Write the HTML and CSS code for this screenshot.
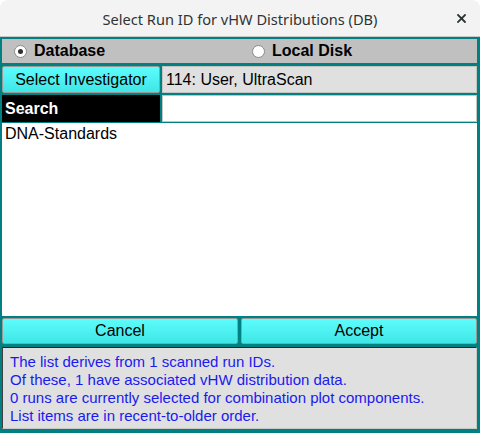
FILE: index.html
```html
<!DOCTYPE html>
<html>
<head>
<meta charset="utf-8">
<link rel="stylesheet" href="styles.css">
</head>
<body>
<div class="window">
  <div class="titlebar">
    <span class="title">Select Run ID for vHW Distributions (DB)</span>
    <svg class="close" width="9" height="9" viewBox="0 0 9 9"><path d="M1 1L8 8M8 1L1 8" stroke="#2e3436" stroke-width="1.8" stroke-linecap="square"/></svg>
  </div>
  <div class="content">
    <div class="radios">
      <label class="radio-item"><span class="radio on"></span>Database</label>
      <label class="radio-item"><span class="radio"></span>Local Disk</label>
    </div>
    <div class="row row-inv">
      <div class="btn">Select Investigator</div>
      <div class="field">114: User, UltraScan</div>
    </div>
    <div class="row row-search">
      <div class="search-label">Search</div>
      <div class="search-input"></div>
    </div>
    <div class="list">
      <div class="list-item">DNA-Standards</div>
    </div>
    <div class="buttons">
      <div class="btn">Cancel</div>
      <div class="btn">Accept</div>
    </div>
    <div class="info">
      <div>The list derives from 1 scanned run IDs.</div>
      <div>Of these, 1 have associated vHW distribution data.</div>
      <div>0 runs are currently selected for combination plot components.</div>
      <div>List items are in recent-to-older order.</div>
    </div>
  </div>
</div>
</body>
</html>
```
FILE: styles.css
```css
html, body {
  margin: 0;
  padding: 0;
  background: #ffffff;
}
.window {
  width: 480px;
  height: 433px;
  display: flex;
  flex-direction: column;
  font-family: "Liberation Sans", Arial, sans-serif;
  font-size: 16px;
}
.titlebar {
  height: 36px;
  border-bottom: 1px solid #c8c8c8;
  background: #f3f3f3;
  border-radius: 8px 8px 0 0;
  display: flex;
  align-items: center;
  justify-content: center;
  position: relative;
}
.title {
  font-family: "Noto Sans", "DejaVu Sans", sans-serif;
  font-size: 14.6px;
  color: #2e3436;
  padding-top: 1px;
}
.close {
  position: absolute;
  right: 14px;
  top: 14px;
}
.content {
  flex: 1;
  background: #008080;
  padding: 2px 3px 4px 2px;
  display: flex;
  flex-direction: column;
}
.radios {
  height: 24px;
  background: #c0c0c0;
  display: grid;
  grid-template-columns: 238px 1fr;
  align-items: center;
}
.radio-item {
  display: flex;
  align-items: center;
  padding-left: 12px;
  font-weight: bold;
  color: #000;
}
.radio {
  width: 11px;
  height: 11px;
  border: 1px solid #8a8a8a;
  border-radius: 50%;
  background: #fff;
  margin-right: 7px;
  position: relative;
  box-sizing: content-box;
}
.radio.on::after {
  content: "";
  position: absolute;
  left: 3px;
  top: 3px;
  width: 5px;
  height: 5px;
  border-radius: 50%;
  background: #303030;
}
.row {
  display: grid;
  grid-template-columns: 158px 1fr;
  column-gap: 2px;
  height: 27px;
}
.row-inv {
  margin-top: 3px;
}
.row-search {
  margin-top: 2px;
}
.btn {
  background: linear-gradient(#5efcfc, #3fe6e6);
  border: 1px solid #9a9a9a;
  border-radius: 2px;
  display: flex;
  align-items: center;
  justify-content: center;
  color: #000;
  box-sizing: border-box;
}
.field {
  background: #e0e0e0;
  border: 1px solid #c4c4c4;
  display: flex;
  align-items: center;
  padding-left: 3px;
  color: #000;
}
.search-label {
  background: #000;
  color: #fff;
  font-weight: bold;
  display: flex;
  align-items: center;
  padding-left: 3px;
}
.search-input {
  background: #fff;
  border: 1px solid #c4c4c4;
}
.list {
  margin-top: 1px;
  height: 193px;
  background: #fff;
}
.list-item {
  padding: 2px 3px;
  color: #000;
}
.buttons {
  margin-top: 2px;
  height: 26px;
  display: grid;
  grid-template-columns: 1fr 1fr;
  column-gap: 3px;
}
.info {
  margin-top: 3px;
  height: 82px;
  box-sizing: border-box;
  background: #e0e0e0;
  border-top: 1px solid #202020;
  border-left: 1px solid #404040;
  border-right: 1px solid #c8c8c8;
  border-bottom: 1px solid #c8c8c8;
  padding: 5px 0 0 7px;
  color: #1a1aee;
  font-size: 15px;
  line-height: 18px;
}
```
